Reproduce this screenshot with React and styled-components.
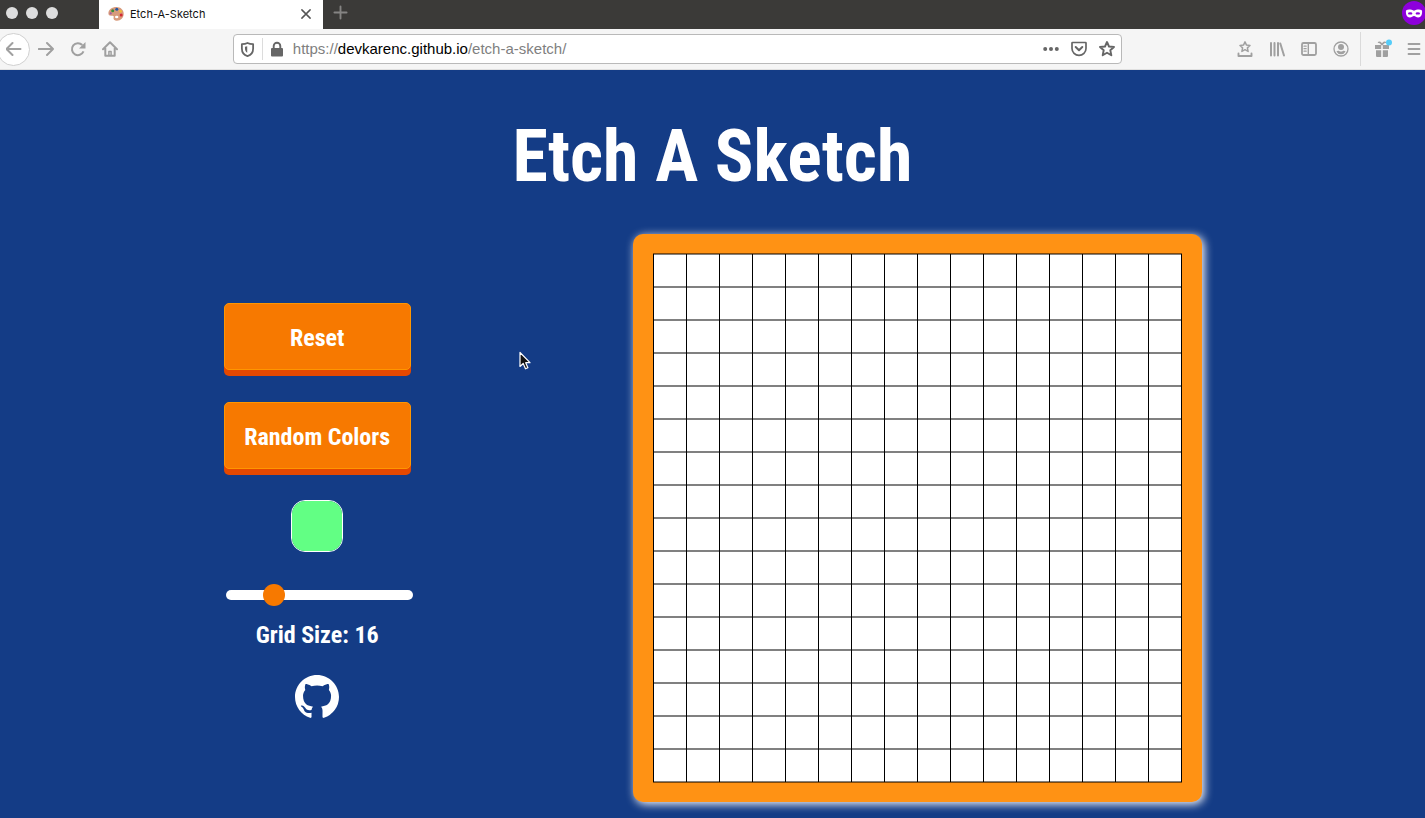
import React, { useState } from "react";
import styled, { createGlobalStyle } from "styled-components";

const GlobalStyle = createGlobalStyle`
  *, *::before, *::after { box-sizing: border-box; }
  html { background: #143c86; }
  body { margin: 0; overflow: hidden; }
  svg { display: block; }
  button { border: 0; padding: 0; background: none; font: inherit; color: inherit; cursor: pointer; }
`;

const display = `"Liberation Sans Narrow", "Roboto Condensed", "DejaVu Sans Condensed", "Liberation Sans", sans-serif`;

const Page = styled.div`
  position: relative;
  min-height: 100vh;
  background: #143c86;
  font-family: Inter, "Liberation Sans", sans-serif;
`;

const TabBar = styled.header`
  display: flex;
  align-items: center;
  height: 29px;
  overflow: hidden;
  background: #3b3a38;
`;

const WindowButtons = styled.div`
  display: flex;
  gap: 8px;
  width: 99px;
  padding-left: 6px;
  margin-top: -4px;
`;

const WindowButton = styled.button`
  width: 12px;
  height: 12px;
  border-radius: 50%;
  background: #dedede !important;
`;

const Tab = styled.div`
  display: flex;
  align-items: center;
  gap: 6px;
  width: 224px;
  height: 29px;
  padding: 0 11px 2px 9px;
  background: #fff;
  color: #111;
`;

const TabTitle = styled.span`
  flex: 1;
  font-size: 11px;
  line-height: 16px;
`;

const NewTab = styled.button`
  margin-left: 10px;
  margin-top: -4px;
`;

const Private = styled.span`
  display: block;
  margin: -4px 0 0 auto;
`;

const Toolbar = styled.nav`
  display: flex;
  align-items: center;
  height: 41px;
  overflow: hidden;
  background: #f5f5f5;
  border-bottom: 1px solid #e0e0e0;
`;

const Tools = styled.div`
  display: flex;
  align-items: center;
  color: #a0a0a0;
  margin-left: ${(p) => (p.$leading ? "-3px" : "0")};
  margin-right: ${(p) => (p.$trailing ? "-5px" : "0")};
`;

const ToolButton = styled.button`
  display: grid;
  place-items: center;
  width: ${(p) => p.$width || 32}px;
  height: 33px;
`;

const BackButton = styled(ToolButton)`
  border: 1px solid #d0d0d0;
  border-radius: 50%;
  background: #fff;
`;

const Divider = styled.span`
  width: 1px;
  height: 34px;
  margin: 0 5px 0 3px;
  background: #dadada;
`;

const Spring = styled.div`
  flex: 107 1 0;
`;

const AddressBar = styled.div`
  display: flex;
  flex: 889 1 0;
  align-items: center;
  height: 30px;
  border: 1px solid #b9b9b9;
  border-radius: 4px;
  background: #fff;
  color: #666;
`;

const AddressDivider = styled.span`
  width: 1px;
  height: 22px;
  background: #dcdcdc;
`;

const Address = styled.div`
  flex: 1;
  padding-left: 2px;
  font-family: "Liberation Sans", sans-serif;
  font-size: 15px;
  line-height: 20px;
  color: #808080;
  white-space: nowrap;
  outline: none;
`;

const Host = styled.span`
  color: #000;
`;

const Title = styled.h1`
  margin: 0;
  padding-top: 47px;
  font: bold 72px/80px ${display};
  text-align: center;
  color: #fff;
`;

const Workspace = styled.main`
  display: flex;
  justify-content: space-evenly;
  align-items: flex-start;
  padding: 37px 0 15px 1px;
`;

const Controls = styled.section`
  display: flex;
  flex-direction: column;
  align-items: center;
  gap: 32px;
  width: 187px;
  margin-top: 69px;
`;

const PushButton = styled.button`
  width: 100%;
  height: 67px;
  padding-top: 2px;
  border: 1px solid #ff9600;
  border-radius: 5px;
  background: #f77900;
  box-shadow: 0 6px 0 #e54800;
  color: #fff;
  font: bold 24px/32px ${display};
  white-space: nowrap;
`;

const ColorPicker = styled.input`
  appearance: none;
  width: 52px;
  height: 52px;
  margin: -1px 0 0;
  padding: 0;
  overflow: hidden;
  border: 1px solid #fff;
  border-radius: 14px;
  background: none;
  cursor: pointer;
  &::-webkit-color-swatch-wrapper { padding: 0; }
  &::-webkit-color-swatch { border: 0; border-radius: 0; }
`;

const SizeControl = styled.div`
  display: flex;
  flex-direction: column;
  align-items: center;
  gap: 13px;
  width: 100%;
`;

const Slider = styled.input`
  appearance: none;
  width: 187px;
  height: 22px;
  margin: 0 -2px 0 2px;
  background: none;
  &::-webkit-slider-runnable-track {
    height: 10px;
    border-radius: 5px;
    background: #fff;
  }
  &::-webkit-slider-thumb {
    appearance: none;
    width: 22px;
    height: 22px;
    margin-top: -6px;
    border-radius: 50%;
    background: #f77900;
  }
`;

const SizeLabel = styled.label`
  font: bold 24px/32px ${display};
  color: #fff;
`;

const GithubLink = styled.a`
  margin-top: -8px;
  color: #fff;
`;

const Board = styled.section`
  padding: 19px 20px;
  border-radius: 10px;
  background: #ff9214;
  box-shadow: 2px 2px 10px #fff;
`;

const Grid = styled.div`
  display: grid;
  grid-template-columns: repeat(${(p) => p.$size}, 32px);
  grid-auto-rows: 33px;
  column-gap: 1px;
  padding: 0 1px;
  border-top: 1px solid #80490a;
  border-bottom: 1px solid #80490a;
  background: #000;
`;

const Cell = styled.div`
  border-top: 1px solid #808080;
  border-bottom: 1px solid #808080;
  background: #fff;
`;

const Pointer = styled.svg`
  position: absolute;
  left: 519px;
  top: 351px;
  pointer-events: none;
`;

function Icon({ size = 16, children, ...rest }) {
  return (
    <svg width={size} height={size} viewBox="0 0 16 16" fill="none" stroke="currentColor" strokeWidth="2" strokeLinecap="round" strokeLinejoin="round" aria-hidden="true" {...rest}>
      {children}
    </svg>
  );
}

const STAR = "M8 1 10 5.500 15 6 11.300 9.300 12.300 14.300 8 11.800 3.700 14.300 4.700 9.300 1 6 6 5.500Z";

function Palette() {
  return (
    <svg width="16" height="16" viewBox="0 0 16 16" aria-hidden="true">
      <path d="M8.5 1C4 1 .4 3.700.4 7.300c0 2.200 1.800 2.800 3.500 2.400 1.500-.3 2.200.5 1.700 1.700-.6 1.800.8 3.300 3.300 3.300 3.900 0 6.800-3.100 6.800-7C15.700 3.900 12.600 1 8.500 1Z" fill="#d89a7b" />
      <ellipse cx="8.700" cy="11" rx="1.700" ry="1.200" fill="#fff" />
      <circle cx="4.700" cy="4.700" r="1.500" fill="#388e3c" />
      <circle cx="8.800" cy="3.200" r="1.500" fill="#2457a4" />
      <circle cx="12.500" cy="5.300" r="1.400" fill="#f0bb35" />
      <circle cx="13.200" cy="9" r="1.500" fill="#d22a35" />
      <circle cx="2.700" cy="7.400" r="1.100" fill="#9a5ca8" />
    </svg>
  );
}

function PrivateMask() {
  return (
    <svg width="23" height="24" viewBox="0 0 23 24" role="img" aria-label="Private window">
      <circle cx="12" cy="12" r="12" fill="#8d00db" />
      <path d="M4 9.500c2-1.500 5.500-1 8 .3 2.500-1.300 6-1.800 8-.3.500 4-1 7-3.800 7-2 0-2.800-1.600-4.200-1.600S9.800 16.500 7.800 16.500C5 16.500 3.500 13.500 4 9.500Z" fill="#fff" />
      <ellipse cx="8.200" cy="12.400" rx="2.200" ry="1.200" fill="#8d00db" />
      <ellipse cx="15.800" cy="12.400" rx="2.200" ry="1.200" fill="#8d00db" />
    </svg>
  );
}

function BrowserChrome() {
  return (
    <>
      <TabBar>
        <WindowButtons>
          <WindowButton aria-label="Close window" />
          <WindowButton aria-label="Minimize window" />
          <WindowButton aria-label="Zoom window" />
        </WindowButtons>
        <Tab>
          <Palette />
          <TabTitle>Etch-A-Sketch</TabTitle>
          <button aria-label="Close tab">
            <Icon size={12} stroke="#555"><path d="M2.500 2.500 13.500 13.500M13.500 2.500 2.500 13.500" /></Icon>
          </button>
        </Tab>
        <NewTab aria-label="New tab">
          <Icon stroke="#858483" size={15}><path d="M8 1.500v13M1.500 8h13" /></Icon>
        </NewTab>
        <Private><PrivateMask /></Private>
      </TabBar>
      <Toolbar aria-label="Browser toolbar">
        <Tools $leading>
          <BackButton $width={33} aria-label="Back">
            <Icon><path d="M14.500 8H.8M6.500 2 .5 8l6 6" /></Icon>
          </BackButton>
          <ToolButton aria-label="Forward"><Icon><path d="M.8 8H15M9 2l6 6-6 6" /></Icon></ToolButton>
          <ToolButton aria-label="Reload">
            <Icon strokeLinecap="butt">
              <path d="M13.500 10.400A6 6 0 1 1 12.300 4" />
              <path d="M15.500 1v6.500H9Z" fill="currentColor" stroke="none" />
            </Icon>
          </ToolButton>
          <ToolButton aria-label="Home">
            <Icon><path d="M1 8.300 8 1.300l7 7M3.300 7.300v7.400h9.400V7.300" /><path d="M6.900 14.500v-4h2.200v4" strokeWidth="1.500" /></Icon>
          </ToolButton>
        </Tools>
        <Spring />
        <AddressBar>
          <ToolButton $width={28} aria-label="Tracking protection">
            <Icon size={15}>
              <path d="M8 1C6 2 3.800 2.200 2 2.200v4.600C2 11.200 4.700 14 8 15c3.300-1 6-3.800 6-8.200V2.200C12.200 2.200 10 2 8 1Z" strokeWidth="1.900" />
              <path d="M7.700 4.500C6.900 4.800 6.200 5 5.300 5.100v1.800c0 2 .9 3.500 2.400 4.500Z" fill="currentColor" stroke="none" />
            </Icon>
          </ToolButton>
          <AddressDivider />
          <ToolButton $width={28} aria-label="Site security">
            <Icon><rect x="2" y="7" width="12" height="8.500" rx="1" fill="currentColor" stroke="none" /><path d="M4.700 8V5a3.300 3.300 0 0 1 6.600 0v3" strokeWidth="1.900" /></Icon>
          </ToolButton>
          <Address role="textbox" aria-label="Address" contentEditable suppressContentEditableWarning spellCheck={false}>
            https://<Host>devkarenc.github.io</Host>/etch-a-sketch/
          </Address>
          <ToolButton $width={28} aria-label="Page actions">
            <Icon fill="currentColor" stroke="none"><circle cx="2.200" cy="8" r="2" /><circle cx="8" cy="8" r="2" /><circle cx="13.800" cy="8" r="2" /></Icon>
          </ToolButton>
          <ToolButton $width={28} aria-label="Save to Pocket">
            <Icon><path d="M1.500 1.500h13c.3 0 .5.200.5.500v5.500a7 6.800 0 0 1-14 0V2c0-.3.200-.5.500-.5Z" strokeWidth="1.700" /><path d="M4.700 6 8 9.200 11.300 6" /></Icon>
          </ToolButton>
          <ToolButton $width={28} aria-label="Bookmark this page"><Icon><path d={STAR} strokeWidth="1.900" /></Icon></ToolButton>
        </AddressBar>
        <Spring />
        <Tools $trailing>
          <ToolButton aria-label="Bookmarks menu">
            <Icon><path d="M8 .9 9.500 4.100l3.500.4-2.600 2.400.7 3.500L8 8.700 4.900 10.400l.7-3.500L3 4.500l3.500-.4Z" strokeWidth="1.500" /><path d="M1.500 12.500V15h13v-2.500" strokeWidth="1.900" /></Icon>
          </ToolButton>
          <ToolButton aria-label="Library">
            <Icon><path d="M2 2v12.500M5.500 2v12.500M9 2v12.500" /><path d="m11.300 2.500 3.700 12" /></Icon>
          </ToolButton>
          <ToolButton aria-label="Sidebars">
            <Icon><rect x="1" y="2" width="14" height="12" rx="1.500" strokeWidth="1.800" /><path d="M7.300 2v12" strokeWidth="1.400" /><path d="M3 5.200h2.200M3 7.700h2.200M3 10.200h2.200" strokeWidth="1.200" /></Icon>
          </ToolButton>
          <ToolButton aria-label="Account">
            <Icon><circle cx="8" cy="8" r="7" strokeWidth="1.300" /><circle cx="8" cy="6" r="3" fill="currentColor" stroke="none" /><path d="M3.400 10.400c1-.9 2-.9 2.700-.5 1.200.7 2.600.7 3.800 0 .7-.4 1.700-.4 2.700.5A5.200 5.200 0 0 1 8 13.200a5.200 5.200 0 0 1-4.600-2.800Z" fill="currentColor" stroke="none" /></Icon>
          </ToolButton>
          <Divider />
          <ToolButton aria-label="What's new">
            <svg width="20" height="20" viewBox="0 0 20 20" fill="currentColor" aria-hidden="true">
              <path d="M3 6h6.200v4H3zM10.800 6H17v4h-6.200zM4 11.300h5.200V18H5a1 1 0 0 1-1-1ZM10.800 11.300H16V17a1 1 0 0 1-1 1h-4.200Z" />
              <path d="M10 6C9 3.500 7 2.600 6.500 4M10 6c1-2.500 3-3.400 3.500-2" fill="none" stroke="currentColor" strokeWidth="1.800" />
              <circle cx="17" cy="3.500" r="3" fill="#55ccf8" />
            </svg>
          </ToolButton>
          <ToolButton aria-label="Open menu">
            <Icon strokeWidth="1.800"><path d="M2.500 3h11M2.500 8h11M2.500 13h11" /></Icon>
          </ToolButton>
        </Tools>
      </Toolbar>
    </>
  );
}

export default function App() {
  const [size, setSize] = useState(16);
  const [color, setColor] = useState("#62ff84");
  const [painted, setPainted] = useState({});

  return (
    <Page>
      <GlobalStyle />
      <BrowserChrome />
      <Title>Etch A Sketch</Title>
      <Workspace>
        <Controls>
          <PushButton onClick={() => setPainted({})}>Reset</PushButton>
          <PushButton onClick={() => setColor("#" + Math.floor(Math.random() * 16777215).toString(16).padStart(6, "0"))}>
            Random Colors
          </PushButton>
          <ColorPicker type="color" aria-label="Brush color" value={color} onChange={(e) => setColor(e.target.value)} />
          <SizeControl>
            <Slider id="grid-size" type="range" min="2" max="64" value={size} onChange={(e) => setSize(Number(e.target.value))} />
            <SizeLabel htmlFor="grid-size">Grid Size: {size}</SizeLabel>
          </SizeControl>
          <GithubLink href="https://github.com/devkarenc/etch-a-sketch" aria-label="GitHub repository">
            <svg width="44" height="44" viewBox="0 0 16 16" fill="currentColor" aria-hidden="true">
              <path d="M8 0C3.580 0 0 3.580 0 8c0 3.540 2.290 6.530 5.470 7.590.4.070.55-.17.55-.38 0-.19-.01-.82-.01-1.490-2.010.37-2.530-.49-2.690-.94-.09-.23-.48-.94-.82-1.130-.28-.15-.68-.52-.01-.53.63-.01 1.080.58 1.230.82.72 1.210 1.870.87 2.330.66.07-.52.28-.87.51-1.070-1.780-.2-3.640-.89-3.640-3.950 0-.87.31-1.590.82-2.150-.08-.2-.36-1.020.08-2.120 0 0 .67-.21 2.200.82.64-.18 1.320-.27 2-.27.68 0 1.360.09 2 .27 1.530-1.040 2.200-.82 2.200-.82.44 1.100.16 1.920.08 2.120.51.56.82 1.270.82 2.150 0 3.070-1.870 3.750-3.650 3.950.29.25.54.73.54 1.480 0 1.070-.01 1.930-.01 2.200 0 .21.15.46.55.38A8.013 8.013 0 0 0 16 8c0-4.420-3.580-8-8-8Z" />
            </svg>
          </GithubLink>
        </Controls>
        <Board aria-label="Drawing board">
          <Grid $size={size}>
            {Array.from({ length: size * size }, (_, i) => (
              <Cell
                key={i}
                style={painted[i] ? { background: painted[i] } : undefined}
                onMouseDown={() => setPainted((p) => ({ ...p, [i]: color }))}
              />
            ))}
          </Grid>
        </Board>
      </Workspace>
      <Pointer width="13" height="20" viewBox="0 0 13 20" aria-hidden="true">
        <path d="M1 1.500v14l3.200-3 2.300 5.300 2.400-1-2.200-5.100H11Z" fill="#111" stroke="#fff" strokeWidth="1.200" strokeLinejoin="round" />
      </Pointer>
    </Page>
  );
}
